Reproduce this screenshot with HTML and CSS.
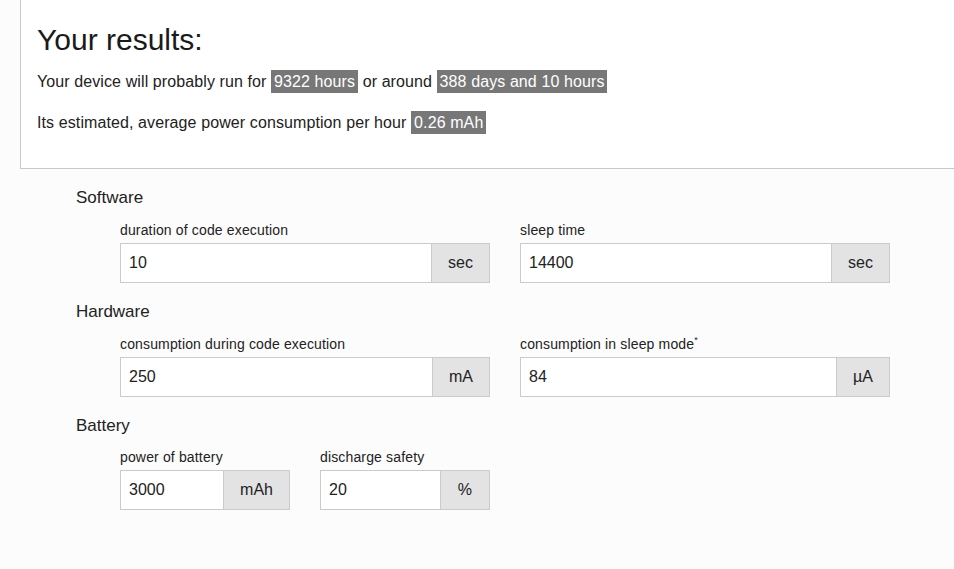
FILE: index.html
```html
<!DOCTYPE html>
<html>
<head>
<meta charset="utf-8">
<link rel="stylesheet" href="styles.css">
</head>
<body>
<section class="results">
  <h1 class="results-title">Your results:</h1>
  <p class="results-line">Your device will probably run for <span class="value">9322 hours</span> or around <span class="value">388 days and 10 hours</span></p>
  <p class="results-line">Its estimated, average power consumption per hour <span class="value">0.26 mAh</span></p>
</section>

<form class="calc">
  <h2 class="group-title">Software</h2>
  <div class="fields">
    <div class="field half">
      <label class="field-label">duration of code execution</label>
      <div class="input-group">
        <input class="input" type="text" value="10">
        <span class="addon">sec</span>
      </div>
    </div>
    <div class="field half">
      <label class="field-label">sleep time</label>
      <div class="input-group">
        <input class="input" type="text" value="14400">
        <span class="addon">sec</span>
      </div>
    </div>
  </div>

  <h2 class="group-title">Hardware</h2>
  <div class="fields">
    <div class="field half">
      <label class="field-label">consumption during code execution</label>
      <div class="input-group">
        <input class="input" type="text" value="250">
        <span class="addon">mA</span>
      </div>
    </div>
    <div class="field half">
      <label class="field-label">consumption in sleep mode<sup class="star">*</sup></label>
      <div class="input-group">
        <input class="input" type="text" value="84">
        <span class="addon">µA</span>
      </div>
    </div>
  </div>

  <h2 class="group-title group-title-tight">Battery</h2>
  <div class="fields">
    <div class="field quarter">
      <label class="field-label">power of battery</label>
      <div class="input-group">
        <input class="input" type="text" value="3000">
        <span class="addon">mAh</span>
      </div>
    </div>
    <div class="field quarter">
      <label class="field-label">discharge safety</label>
      <div class="input-group">
        <input class="input" type="text" value="20">
        <span class="addon addon-narrow">%</span>
      </div>
    </div>
  </div>
</form>
</body>
</html>
```

FILE: styles.css
```css
* { box-sizing: border-box; }

html, body {
  margin: 0;
  padding: 0;
  background: #fcfcfc;
  font-family: "Liberation Sans", Arial, sans-serif;
  color: #222;
}

.results {
  margin-left: 20px;
  background: #fff;
  border-left: 1px solid #c8c8c8;
  border-bottom: 1px solid #c8c8c8;
  padding: 23px 16px 16px 16px;
}

.results-title {
  margin: 0 0 14px 0;
  font-size: 30px;
  line-height: 33px;
  font-weight: normal;
  color: #1a1a1a;
}

.results-line {
  margin: 0 0 18px 0;
  font-size: 16px;
  line-height: 23px;
  letter-spacing: 0.1px;
}

.value {
  display: inline-block;
  background: #777;
  color: #fff;
  padding: 0 3px;
  line-height: 23px;
}

.calc {
  padding: 17px 0 40px 76px;
}

.group-title {
  margin: 0 0 10px 0;
  font-size: 17px;
  line-height: 24px;
  font-weight: normal;
  color: #222;
}

.group-title-tight { margin-bottom: 9px; }

.fields {
  display: flex;
  gap: 30px;
  margin-left: 44px;
  margin-bottom: 17px;
}

.field.half { width: 370px; }
.field.quarter { width: 170px; }

.field-label {
  display: block;
  font-size: 14px;
  line-height: 20px;
  margin-bottom: 3px;
  color: #222;
  letter-spacing: 0.15px;
}

.star {
  font-size: 9px;
  vertical-align: top;
  line-height: 12px;
}

.input-group {
  display: flex;
  height: 40px;
}

.input {
  flex: 1;
  min-width: 0;
  height: 40px;
  border: 1px solid #cbcbcb;
  border-right: none;
  background: #fff;
  padding: 0 8px;
  font-family: "Liberation Sans", Arial, sans-serif;
  font-size: 16px;
  color: #222;
  margin: 0;
  outline: none;
}

.addon {
  display: flex;
  align-items: center;
  justify-content: center;
  padding: 0 16px;
  background: #e3e3e3;
  border: 1px solid #cbcbcb;
  font-size: 16px;
  color: #222;
}

.addon-narrow { padding: 0 17px; }
```
